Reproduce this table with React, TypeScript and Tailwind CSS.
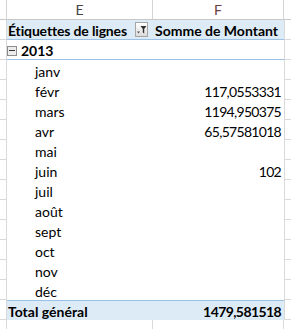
/** Excel pivot table: Somme de Montant by month. */

const months: { label: string; value?: string }[] = [
  { label: "janv" },
  { label: "févr", value: "117,0553331" },
  { label: "mars", value: "1194,950375" },
  { label: "avr", value: "65,57581018" },
  { label: "mai" },
  { label: "juin", value: "102" },
  { label: "juil" },
  { label: "août" },
  { label: "sept" },
  { label: "oct" },
  { label: "nov" },
  { label: "déc" },
];

const grid = "border-[#d9d9d9]";

function FilterButton() {
  return (
    <div className="flex h-[15px] w-[13px] items-center justify-center border border-[#a6a6a6] bg-gradient-to-b from-white to-[#dcdcdc]">
      <svg width="11" height="13" viewBox="0 0 11 13">
        <path d="M1 8.5h3l-1.5 2z" fill="#505050" />
        <path d="M4.5 3h6l-2.3 3v4.5l-1.4-1V6z" fill="#303030" />
      </svg>
    </div>
  );
}

function Row({
  children,
  className = "",
}: {
  children: React.ReactNode;
  className?: string;
}) {
  return (
    <div className="flex h-[20px]">
      <div className={`w-[7px] shrink-0 border-r border-b ${grid}`} />
      <div className={`flex w-[277px] shrink-0 pt-[2px] ${className}`}>{children}</div>
      <div className={`flex-1 border-l border-b ${grid}`} />
    </div>
  );
}

export default function App() {
  return (
    <div
      className="h-[329px] w-[291px] overflow-hidden bg-white text-[14px] leading-[17px] text-black"
      style={{ fontFamily: "Lato, 'Liberation Sans', sans-serif" }}
    >
      {/* column letters */}
      <div className="flex h-[20px] border-b border-[#c8c8c8] text-[14px] text-[#444]">
        <div className="w-[7px] shrink-0 border-r border-[#d4d4d4]" />
        <div className="flex w-[146px] shrink-0 items-center justify-center border-r border-[#d4d4d4]">E</div>
        <div className="flex w-[131px] shrink-0 items-center justify-center border-r border-[#d4d4d4] text-[#6a3f3f]">F</div>
        <div className="flex-1" />
      </div>

      {/* pivot header */}
      <Row className="border-b border-[#9bc2e6] bg-[#ddebf7] font-bold">
        <div className="flex w-[146px] items-center justify-between pl-[1px] pr-[5px]">
          <span className="tracking-[-0.15px]">Étiquettes de lignes</span>
          <div className="-mt-[2px]">
            <FilterButton />
          </div>
        </div>
        <div className="flex flex-1 items-center pl-[2px]">Somme de Montant</div>
      </Row>

      {/* year */}
      <Row className="border-b border-[#9bc2e6] font-bold">
        <div className="flex items-center gap-[4px]">
          <div className="flex h-[10px] w-[10px] items-center justify-center border border-[#8c8c8c] bg-[#ececec]">
            <div className="h-[1px] w-[6px] bg-[#333]" />
          </div>
          <span>2013</span>
        </div>
      </Row>

      {months.map((m) => (
        <Row key={m.label}>
          <div className="flex w-[146px] items-center pl-[28px]">{m.label}</div>
          <div className="flex flex-1 items-center justify-end pr-[3px] tracking-[-0.7px]">{m.value}</div>
        </Row>
      ))}

      {/* grand total */}
      <Row className="border-t border-[#9bc2e6] bg-[#ddebf7] font-bold">
        <div className="flex w-[146px] items-center pl-[1px]">Total général</div>
        <div className="flex flex-1 items-center justify-end pr-[3px] tracking-[-0.6px]">1479,581518</div>
      </Row>

      {/* empty sheet row */}
      <div className="flex h-[20px]">
        <div className={`w-[7px] shrink-0 border-r border-b ${grid}`} />
        <div className={`w-[146px] shrink-0 border-r border-b ${grid}`} />
        <div className={`w-[131px] shrink-0 border-r border-b ${grid}`} />
        <div className={`flex-1 border-b ${grid}`} />
      </div>
    </div>
  );
}
